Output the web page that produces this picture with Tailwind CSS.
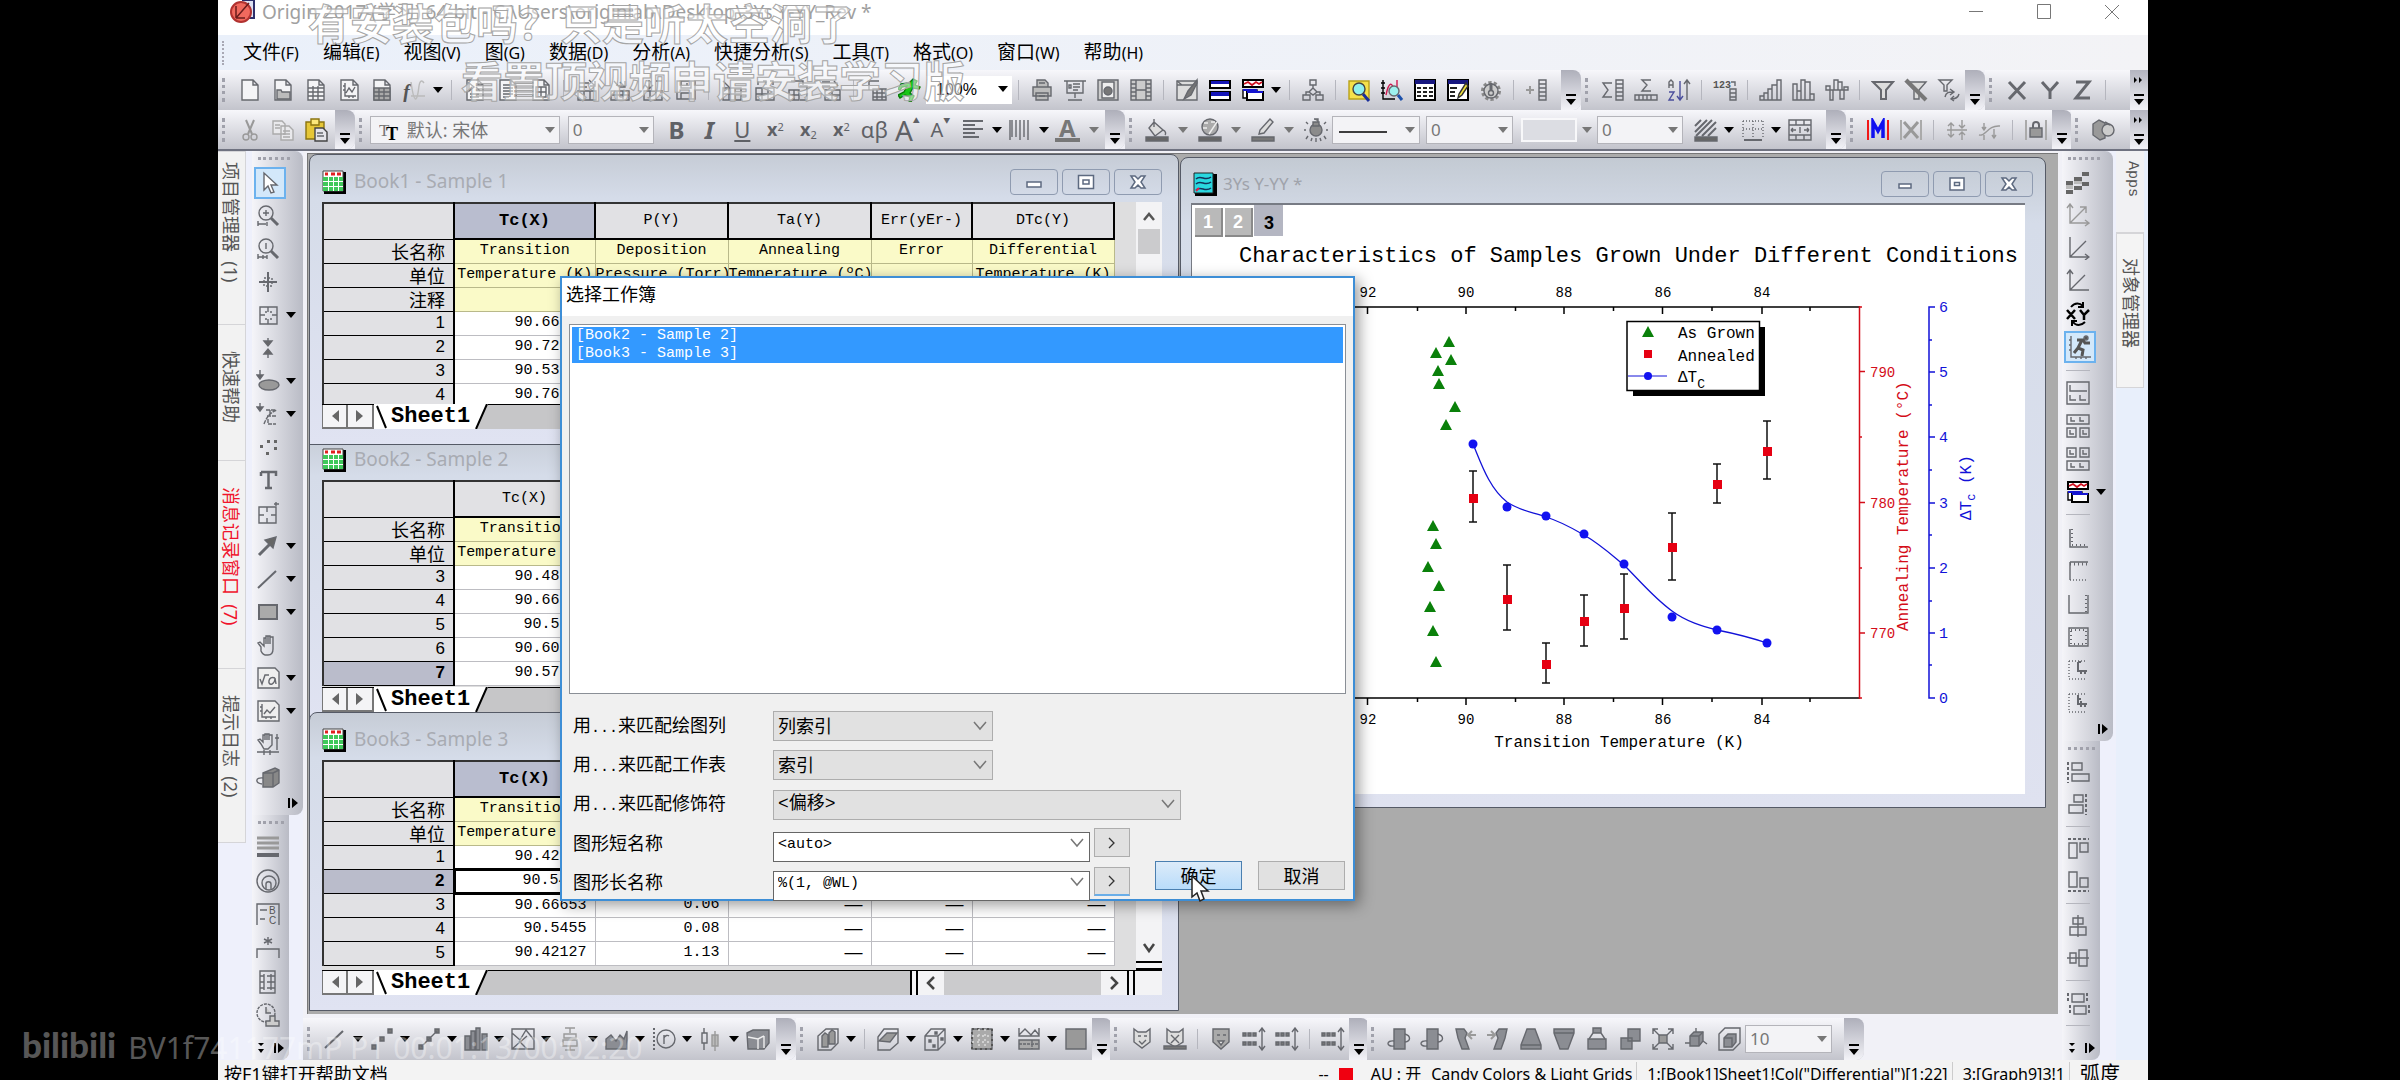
<!DOCTYPE html>
<html lang="zh-CN">
<head>
    <meta charset="UTF-8" />
    <meta name="viewport" content="width=device-width, initial-scale=1.0" />
    <script src="https://cdn.jsdelivr.net/npm/@tailwindcss/browser@4"></script>
    <title>Origin 2017</title>
</head>
<body class="relative h-screen overflow-hidden bg-black pl-[218px] pr-[252px] font-['Noto_Sans','Noto_Sans_CJK_SC',sans-serif] text-black">

<div class="flex h-full flex-col overflow-hidden bg-[#f1f1f7]">

    <!-- Title bar -->
    <header class="flex h-[35px] shrink-0 items-start bg-white pl-3 pr-7">
        <svg class="h-8 w-7 shrink-0" viewBox="0 0 28 32"><path d="M12 0h12v18h-8" fill="#dfe2f2" stroke="#2d2f6b" stroke-width="2"/><ellipse cx="11" cy="12" rx="10" ry="10" fill="#f0695e" stroke="#b13230" stroke-width="2"/><path d="M6 18L19 3M6 18V6M6 18h9" stroke="#6b1d1d" stroke-width="1.5" fill="none"/></svg>
        <h1 class="ml-1 whitespace-pre text-[19px] leading-6 text-[#a0a0a0]">Origin 2017 (学习) 64-bit - C:\Users\originlab\Desktop\3Ys Y-YY_Rev *</h1>
        <div class="ml-auto flex gap-[52px] pt-1">
            <button aria-label="最小化"><svg class="size-4" viewBox="0 0 16 16" fill="none" stroke="#777"><path d="M1 7.500h14"/></svg></button>
            <button aria-label="最大化"><svg class="size-4" viewBox="0 0 16 16" fill="none" stroke="#777"><path d="M1.500 .5h13v14h-13z"/></svg></button>
            <button aria-label="关闭"><svg class="size-4" viewBox="0 0 16 16" fill="none" stroke="#777"><path d="M1 1l14 14M15 1L1 15"/></svg></button>
        </div>
    </header>

    <!-- Menu -->
    <nav class="flex h-[35px] shrink-0 items-center gap-6 bg-gradient-to-r from-[#eaf0fa] to-[#f3f3f6] text-[19px]">
        <span class="-mr-6 ml-1 h-6 w-[21px] border-l-2 border-dotted border-[#a8a8b4]"></span>
        <a href="#">文件<span class="text-[16px]">(F)</span></a>
        <a href="#">编辑<span class="text-[16px]">(E)</span></a>
        <a href="#">视图<span class="text-[16px]">(V)</span></a>
        <a href="#">图<span class="text-[16px]">(G)</span></a>
        <a href="#">数据<span class="text-[16px]">(D)</span></a>
        <a href="#">分析<span class="text-[16px]">(A)</span></a>
        <a href="#">快捷分析<span class="text-[16px]">(S)</span></a>
        <a href="#">工具<span class="text-[16px]">(T)</span></a>
        <a href="#">格式<span class="text-[16px]">(O)</span></a>
        <a href="#">窗口<span class="text-[16px]">(W)</span></a>
        <a href="#">帮助<span class="text-[16px]">(H)</span></a>
    </nav>

    <!-- Standard toolbar -->
    <div class="flex h-10 shrink-0">
        <div class="flex min-w-0 flex-[1363] items-center rounded-r-lg bg-gradient-to-b from-[#f7f7fb] to-[#c3c4cc]">
            <span class="contents" data-bar="grip new open sheet graph matrix fx v | layout notes table | imp1 imp2 imp3 save | tree bin bin2 bin3 | sheet2 run"></span>
            <label class="relative h-7 w-[86px] shrink-0 bg-white">
                <select aria-label="缩放" class="h-full w-full appearance-none pl-2.5 font-['Liberation_Sans',sans-serif] text-[16px]"><option>100%</option></select>
                <svg class="pointer-events-none absolute top-2 right-1 h-2.5 w-2.5" viewBox="0 0 10 10"><path d="M0 2h10l-5 6z"/></svg>
            </label>
            <span class="contents" data-bar="| print present page film | brush rows rgraph v | org | search zoomg sheet3 edit gear | addcol fly"></span>
        </div>
        <div class="flex min-w-0 flex-[404] items-center rounded-r-lg bg-gradient-to-b from-[#f7f7fb] to-[#c3c4cc]" data-bar="grip sumcol sumrow sort | num | bars1 bars2 bars3 | funnel nofunnel refunnel fly"></div>
        <div class="flex min-w-0 flex-[163] items-center bg-gradient-to-b from-[#f7f7fb] to-[#c3c4cc]" data-bar="grip X Y Z | more"></div>
    </div>

    <!-- Format toolbar -->
    <div class="flex h-[41px] shrink-0 border-b-2 border-[#6f7280]">
        <div class="flex min-w-0 flex-[137] items-center rounded-r-lg bg-gradient-to-b from-[#f7f7fb] to-[#c3c4cc]" data-bar="grip cut copy paste fly"></div>
        <div class="flex min-w-0 flex-[771] items-center rounded-r-lg bg-gradient-to-b from-[#f7f7fb] to-[#c3c4cc]">
            <span class="contents" data-bar="grip"></span>
            <label class="relative h-7 w-[190px] shrink-0 border border-[#b4b4ba] bg-[#f3f3f6]">
                <svg class="pointer-events-none absolute top-1 left-2 h-5 w-6" viewBox="0 0 24 20"><text x="0" y="15" font-family="Liberation Serif" font-size="17" fill="#777">T</text><text x="7" y="19" font-family="Liberation Serif" font-weight="bold" font-size="18">T</text></svg>
                <select aria-label="字体" class="h-full w-full appearance-none pl-9 text-[18px] leading-6 text-[#777]"><option>默认: 宋体</option></select>
                <svg class="pointer-events-none absolute top-2 right-1 h-2.5 w-2.5" viewBox="0 0 10 10"><path d="M0 2h10l-5 6z" fill="#777"/></svg>
            </label>
            <label class="relative mr-1.5 ml-2 h-7 w-[86px] shrink-0 border border-[#b4b4ba] bg-[#f3f3f6]">
                <select aria-label="字号" class="h-full w-full appearance-none pl-1 text-[17px] leading-6 text-[#777]"><option>0</option></select>
                <svg class="pointer-events-none absolute top-2 right-1 h-2.5 w-2.5" viewBox="0 0 10 10"><path d="M0 2h10l-5 6z" fill="#777"/></svg>
            </label>
            <span class="contents" data-bar="B I U sup sub supsub ab Abig Asmall align v cols v Acolor w fly"></span>
        </div>
        <div class="flex min-w-0 flex-[722] items-center rounded-r-lg bg-gradient-to-b from-[#f7f7fb] to-[#c3c4cc]">
            <span class="contents" data-bar="grip bucket w palette w pencil w bulb"></span>
            <label class="relative h-7 w-[88px] shrink-0 border border-[#b4b4ba] bg-[#f3f3f6]">
                <select aria-label="线型" class="h-full w-full appearance-none pl-1 text-[17px]"><option></option></select>
                <svg class="pointer-events-none absolute top-2 left-1.5 h-3 w-12" viewBox="0 0 48 12"><path d="M0 7h48" stroke="#000" stroke-width="1.5"/></svg>
                <svg class="pointer-events-none absolute top-2 right-1 h-2.5 w-2.5" viewBox="0 0 10 10"><path d="M0 2h10l-5 6z" fill="#777"/></svg>
            </label>
            <label class="relative ml-1.5 h-7 w-[87px] shrink-0 border border-[#b4b4ba] bg-[#f3f3f6]">
                <select aria-label="线宽" class="h-full w-full appearance-none pl-1 text-[17px] leading-6 text-[#777]"><option>0</option></select>
                <svg class="pointer-events-none absolute top-2 right-1 h-2.5 w-2.5" viewBox="0 0 10 10"><path d="M0 2h10l-5 6z" fill="#777"/></svg>
            </label>
            <label class="relative ml-2 h-6 w-[56px] shrink-0 border-2 border-[#f8f8fa] bg-[#dcdde3]">
                <select aria-label="填充" class="h-full w-full appearance-none"><option></option></select>
            </label>
            <span class="contents" data-bar="w"></span>
            <label class="relative mr-1.5 h-7 w-[86px] shrink-0 border border-[#b4b4ba] bg-[#f3f3f6]">
                <select aria-label="大小" class="h-full w-full appearance-none pl-1 text-[17px] leading-6 text-[#777]"><option>0</option></select>
                <svg class="pointer-events-none absolute top-2 right-1 h-2.5 w-2.5" viewBox="0 0 10 10"><path d="M0 2h10l-5 6z" fill="#777"/></svg>
            </label>
            <span class="contents" data-bar="hatch v border v merge fly"></span>
        </div>
        <div class="flex min-w-0 flex-[225] items-center rounded-r-lg bg-gradient-to-b from-[#f7f7fb] to-[#c3c4cc]" data-bar="grip M Mx | mv1 mv2 | lock fly"></div>
        <div class="flex min-w-0 flex-[77] items-center bg-gradient-to-b from-[#f7f7fb] to-[#c3c4cc]" data-bar="grip cube more"></div>
    </div>

    <!-- Work area -->
    <main class="flex min-h-0 flex-1">
        <aside class="flex w-[34px] shrink-0 flex-col bg-[#eef0fb] text-[18px] leading-6 text-[#555] [text-orientation:sideways]">
            <a href="#" class="h-[174px] w-[28px] whitespace-pre border border-l-0 border-[#d5d5d8] bg-[#f2f2f2] pt-2.5 pr-0.5 [writing-mode:vertical-rl]">项目管理器  (1)</a>
            <a href="#" class="h-[136px] w-[28px] whitespace-pre border border-t-0 border-l-0 border-[#d5d5d8] bg-[#f2f2f2] pt-[26px] pr-0.5 [writing-mode:vertical-rl]">快速帮助</a>
            <a href="#" class="h-[208px] w-[28px] whitespace-pre border border-t-0 border-l-0 border-[#d5d5d8] bg-[#f2f2f2] pt-[26px] pr-0.5 text-[#f0142c] [writing-mode:vertical-rl]">消息记录窗口  (7)</a>
            <a href="#" class="h-[174px] w-[28px] whitespace-pre border border-t-0 border-l-0 border-[#d5d5d8] bg-[#f2f2f2] pt-[26px] pr-0.5 [writing-mode:vertical-rl]">提示日志  (2)</a>
        </aside>

        <div class="flex w-[51px] shrink-0 flex-col bg-[#eef0fb]">
            <div class="flex h-[664px] flex-col rounded-r-lg bg-gradient-to-r from-[#f5f5f9] to-[#b9bbc5]" data-col="vgrip *pointer zoomin zoomout cross screen+ squeeze mask+ maskx+ dots T region arrow+ line+ rect+ hand formula+ graph2+ hand2 cube2 vend"></div>
            <div class="flex w-[37px] flex-1 flex-col rounded-br-lg bg-gradient-to-r from-[#f5f5f9] to-[#b9bbc5]" data-col="vgrip lines rings bc star stamp clock vmore"></div>
        </div>

        <div class="flex min-w-0 flex-1 flex-col">
            <!-- MDI desktop -->
            <div class="relative mt-[2px] mr-[2px] ml-1 min-h-0 flex-1 overflow-hidden border-t border-l border-[#777] bg-[#ababab]">
                <div id="books"></div>

                <!-- Graph window -->
                <section class="absolute top-[3px] left-[872px] flex h-[651px] w-[866px] flex-col rounded-t-lg border border-[#555a66] bg-gradient-to-b from-[#c3cad3] via-[#d5dce9] via-10% to-[#dfe2f0]">
                    <div class="flex h-[45px] shrink-0 items-center gap-1.5 px-3 pt-1.5">
                        <svg class="size-6" viewBox="0 0 24 24"><path d="M2 2h22v22H2z"/><path d="M1 1h19v20H1z" fill="#29d8e0" stroke="#222"/><path d="M3 7c5-5 9 3 15-2M3 12c5-5 9 3 15-2M3 18c5-5 9 3 15-2" fill="none" stroke="#14325a" stroke-width="1.500"/><path d="M3 19l3-3" stroke="#e0204a" stroke-width="2"/></svg>
                        <h2 class="text-[17px] text-[#a0a3ab]">3Ys Y-YY *</h2>
                        <div class="ml-auto flex gap-1">
                            <button aria-label="最小化" class="flex h-[26px] w-12 items-center justify-center rounded-sm border border-[#8f9bb0]"><svg class="size-5" viewBox="0 0 20 20" fill="#fff" stroke="#5d6a80" stroke-width="1.500"><path d="M4 10h12v4H4z"/></svg></button>
                            <button aria-label="还原" class="flex h-[26px] w-12 items-center justify-center rounded-sm border border-[#8f9bb0]"><svg class="size-5" viewBox="0 0 20 20" fill="#fff" stroke="#5d6a80" stroke-width="1.500"><path d="M3 4h14v12H3zM7.500 8.500h5v3h-5z"/></svg></button>
                            <button aria-label="关闭" class="flex h-[26px] w-12 items-center justify-center rounded-sm border border-[#8f9bb0]"><svg class="size-5" viewBox="0 0 20 20" fill="#fff" stroke="#5d6a80" stroke-width="1.500"><path d="M3 4h4l3 3 3-3h4l-4 6 4 6h-4l-3-3-3 3H3l4-6z"/></svg></button>
                        </div>
                    </div>
                    <div class="mr-5 mb-[13px] ml-2.5 min-h-0 flex-1 border-t-2 border-l border-[#777b84] bg-white">
                        <svg id="chart" class="h-[589px] w-[834px]" viewBox="0 0 834 589" font-family="Liberation Mono" font-size="15">
                            <g font-size="18" font-weight="bold" font-family="Liberation Sans">
                                <path d="M3 3h27v28H3zM33 3h27v28H33z" fill="#b9b9b9"/><path d="M3 31h27V3M33 31h27V3" fill="none" stroke="#8a8a8a" stroke-width="2"/><path d="M62 0h29v31H62z" fill="#b4b6c2"/>
                                <text x="11" y="23" fill="#fff">1</text><text x="41" y="23" fill="#fff">2</text><text x="72" y="24">3</text>
                            </g>
                            <text x="47" y="57" font-size="22">Characteristics of Samples Grown Under Different Conditions</text>
                            <g id="axis" fill="none" stroke="#000" stroke-width="1.500">
                                <path d="M60 102H667M60 493H667"/>
                                <path d="M175.500 102v7M274 102v7M372 102v7M470.500 102v7M570 102v7M225.500 102v4M323.500 102v4M421.500 102v4M520 102v4M618 102v4M175.500 493v7M274 493v7M372 493v7M470.500 493v7M570 493v7M225.500 493v4M323.500 493v4M421.500 493v4M520 493v4M618 493v4"/>
                                <path stroke="#d40d19" d="M667.500 101V494M667 166.500h6M667 297.500h6M667 428h6M667 102h3M667 232h3M667 363h3M667 493h3"/>
                                <path stroke="#1212d8" d="M743 102h-6V493h6M737 167h6M737 232h6M737 298h6M737 363h6M737 428h6M737 135h3M737 200h3M737 265h3M737 330h3M737 396h3M737 460h3"/>
                            </g>
                            <g text-anchor="middle" font-size="14">
                                <text x="176" y="92">92</text><text x="274" y="92">90</text><text x="372" y="92">88</text><text x="471" y="92">86</text><text x="570" y="92">84</text>
                                <text x="176" y="519">92</text><text x="274" y="519">90</text><text x="372" y="519">88</text><text x="471" y="519">86</text><text x="570" y="519">84</text>
                                <text x="427" y="542" font-size="16">Transition Temperature (K)</text>
                            </g>
                            <g fill="#d40d19" font-size="14"><text x="678" y="172">790</text><text x="678" y="303">780</text><text x="678" y="433">770</text><text transform="translate(716 426) rotate(-90)" font-size="16">Annealing Temperature (°C)</text></g>
                            <g fill="#1212d8"><text x="747" y="107">6</text><text x="747" y="172">5</text><text x="747" y="237">4</text><text x="747" y="303">3</text><text x="747" y="368">2</text><text x="747" y="433">1</text><text x="747" y="498">0</text><text transform="translate(779 315) rotate(-90)" font-size="16">ΔT<tspan dy="4" font-size="12">c</tspan><tspan dy="-4"> (K)</tspan></text></g>
                            <path d="M281 239C289 258 297 283 315 297C328 306 340 307 354 312C370 317 380 323 392 330C408 339 422 352 432 360C448 376 462 393 480 406C495 417 510 421 525 425C545 429 560 433 575 438" fill="none" stroke="#1212d8" stroke-width="1.300"/>
                            <g id="points"></g>
                            <path d="M441 122h132v69H441z"/><path d="M435 116.500h132.500v69H435z" fill="#fff" stroke="#000" stroke-width="1.500"/>
                            <path d="M456 121l-6 11h12z" fill="#0a800a"/><path d="M452 145h8v8h-8z" fill="#e60012"/><path d="M436 171h39" stroke="#1212d8"/><circle cx="456" cy="171" r="4" fill="#1212f0"/>
                            <g font-size="16"><text x="486" y="133">As Grown</text><text x="486" y="156">Annealed</text><text x="486" y="177">ΔT<tspan dy="6" font-size="13">C</tspan></text></g>
                        </svg>
                    </div>
                </section>
            </div>

            <!-- 2D / 3D graph toolbar -->
            <div class="mt-1 flex h-[42px] shrink-0">
                <div class="flex min-w-0 flex-[493] items-center rounded-r-lg bg-gradient-to-b from-[#f7f7fb] to-[#c3c4cc]" data-bar="grip line v scatter v linesym v column v multi v box v area v polar v stock v stack fly"></div>
                <div class="flex min-w-0 flex-[314] items-center rounded-r-lg bg-gradient-to-b from-[#f7f7fb] to-[#c3c4cc]" data-bar="grip bar3d v | surf v scat3d v contour v profile v image fly"></div>
                <div class="flex min-w-0 flex-[257] items-center rounded-r-lg bg-gradient-to-b from-[#f7f7fb] to-[#c3c4cc]" data-bar="grip mask1 mask2 | mask3 dist1 dist2 | dist3 fly"></div>
                <div class="flex min-w-0 flex-[497] items-center rounded-r-lg bg-gradient-to-b from-[#f7f7fb] to-[#c3c4cc]">
                    <span class="contents" data-bar="grip rot1 rot2 tilt1 tilt2 trap1 trap2 trap3 resize fit orient box3d"></span>
                    <label class="relative h-7 w-[87px] shrink-0 border border-[#b4b4ba] bg-[#f3f3f6]">
                        <select aria-label="角度" class="h-full w-full appearance-none pl-1 text-[17px] leading-6 text-[#777]"><option>10</option></select>
                        <svg class="pointer-events-none absolute top-2 right-1 h-2.5 w-2.5" viewBox="0 0 10 10"><path d="M0 2h10l-5 6z" fill="#777"/></svg>
                    </label>
                    <span class="contents" data-bar="fly"></span>
                </div>
                <div class="flex-[196]"></div>
            </div>
        </div>

        <div class="ml-[2px] flex w-[54px] shrink-0 flex-col bg-[#eef0fb]">
            <div class="flex h-[590px] w-[51px] flex-col rounded-r-lg bg-gradient-to-r from-[#f5f5f9] to-[#b9bbc5]" data-col="vgrip stairs ax1 ax2 ax3 xy *runner - lay1 lay2 lay3 rgraph+ - l1 l2 l3 l4 l5 l6 vend"></div>
            <div class="flex w-[38px] flex-1 flex-col rounded-br-lg bg-gradient-to-r from-[#f5f5f9] to-[#b9bbc5]" data-col="vgrip al1 al2 - al3 al4 - al5 al6 - al7 - vmore"></div>
        </div>
        <aside class="flex w-8 shrink-0 flex-col bg-[#e8effb] text-[18px] leading-6 text-[#555] [text-orientation:sideways]">
            <a href="#" class="h-[82px] w-7 border-b border-[#d5d5d8] bg-[#f1f1f3] pt-2.5 font-['Liberation_Mono',monospace] text-[15px] [writing-mode:vertical-rl]">Apps</a>
            <a href="#" class="h-[155px] w-7 border border-[#d5d5d8] bg-[#f4f4f4] pt-6 [writing-mode:vertical-rl]">对象管理器</a>
        </aside>
    </main>

    <!-- Status bar -->
    <footer class="flex h-5 shrink-0 items-start overflow-hidden bg-[#f3f3f3] pt-0.5 pl-1.5 text-[17px] leading-6">
        <span class="text-[18px]">按F1键打开帮助文档</span>
        <div class="ml-auto flex shrink-0 items-start gap-2.5 pr-7 text-[16px] whitespace-nowrap">
            <span>--</span><span class="mt-1.5 mr-2 h-4 w-3.5 bg-[#f00010]"></span>
            <span>AU : 开</span>
            <span class="border-r border-[#ccc] pr-1">Candy Colors &amp; Light Grids</span>
            <span class="border-r border-[#ccc] pr-1">1:[Book1]Sheet1!Col("Differential")[1:22]</span>
            <span class="border-r border-[#ccc] pr-1">3:[Graph9]3!1</span>
            <span class="text-[20px]">弧度</span>
        </div>
    </footer>
</div>

<!-- Dialog -->
<form role="dialog" aria-labelledby="dlgTitle" class="absolute top-[276px] left-[560px] flex h-[625px] w-[795px] flex-col border-2 border-[#3d8ed6] bg-[#f0f0f0] text-[18px] shadow-[4px_4px_14px_rgba(0,0,0,0.4)]">
    <h2 id="dlgTitle" class="h-[38px] shrink-0 bg-white pl-1 leading-8">选择工作簿</h2>
    <select id="books-list" aria-label="工作簿" multiple size="2" class="mx-[7px] mt-2 h-[370px] shrink-0 overflow-hidden border border-[#8a8f96] bg-white p-0.5 font-['Liberation_Mono',monospace] text-[15px] leading-5">
        <option class="h-[18px] bg-[#3399ff] p-0 pl-1 text-white">[Book2 - Sample 2]</option>
        <option class="h-[18px] bg-[#3399ff] p-0 pl-1 text-white">[Book3 - Sample 3]</option>
    </select>
    <div class="mt-[17px] ml-[11px] grid grid-cols-[200px_1fr] items-center gap-y-[9px]">
        <label for="m1">用<span class="font-['Liberation_Mono',monospace] text-[15px]">...</span>来匹配绘图列</label>
        <div class="relative h-[30px] w-[220px]"><select id="m1" class="h-full w-full appearance-none border border-[#adadad] bg-[#e1e1e1] pl-1"><option>列索引</option></select><svg class="pointer-events-none absolute top-2.5 right-1.5 h-2.5 w-3.5" viewBox="0 0 14 10"><path d="M1 1l6 7 6-7" fill="none" stroke="#777" stroke-width="1.500"/></svg></div>
        <label for="m2">用<span class="font-['Liberation_Mono',monospace] text-[15px]">...</span>来匹配工作表</label>
        <div class="relative h-[30px] w-[220px]"><select id="m2" class="h-full w-full appearance-none border border-[#adadad] bg-[#e1e1e1] pl-1"><option>索引</option></select><svg class="pointer-events-none absolute top-2.5 right-1.5 h-2.5 w-3.5" viewBox="0 0 14 10"><path d="M1 1l6 7 6-7" fill="none" stroke="#777" stroke-width="1.500"/></svg></div>
        <label for="m3">用<span class="font-['Liberation_Mono',monospace] text-[15px]">...</span>来匹配修饰符</label>
        <div class="relative h-[30px] w-[408px]"><select id="m3" class="h-full w-full appearance-none border border-[#adadad] bg-[#e1e1e1] pl-1 font-['Liberation_Mono','Noto_Sans_CJK_SC',monospace]"><option>&lt;偏移&gt;</option></select><svg class="pointer-events-none absolute top-2.5 right-1.5 h-2.5 w-3.5" viewBox="0 0 14 10"><path d="M1 1l6 7 6-7" fill="none" stroke="#777" stroke-width="1.500"/></svg></div>
        <label for="m4">图形短名称</label>
        <div class="flex gap-1">
            <div class="relative h-[30px] w-[317px]"><input id="m4" value="&lt;auto&gt;" class="h-full w-full border border-[#666] bg-white pb-1 pl-1 font-['Liberation_Mono',monospace] text-[15px]" /><svg class="pointer-events-none absolute top-2.5 right-1.5 h-2.5 w-3.5" viewBox="0 0 14 10"><path d="M1 1l6 7 6-7" fill="none" stroke="#777" stroke-width="1.500"/></svg></div>
            <button type="button" class="h-[29px] w-9 border border-[#adadad] bg-[#e1e1e1]" aria-label="短名称选项"><svg class="mx-auto h-3 w-2" viewBox="0 0 8 12"><path d="M1 1l5 5-5 5" fill="none" stroke="#333" stroke-width="1.300"/></svg></button>
        </div>
        <label for="m5">图形长名称</label>
        <div class="flex gap-1">
            <div class="relative h-[30px] w-[317px]"><input id="m5" value="%(1, @WL)" class="h-full w-full border border-[#666] bg-white pb-1 pl-1 font-['Liberation_Mono',monospace] text-[15px]" /><svg class="pointer-events-none absolute top-2.5 right-1.5 h-2.5 w-3.5" viewBox="0 0 14 10"><path d="M1 1l6 7 6-7" fill="none" stroke="#777" stroke-width="1.500"/></svg></div>
            <button type="button" class="h-[29px] w-9 border border-b-2 border-[#adadad] border-b-[#6aaee8] bg-[#e1e1e1]" aria-label="长名称选项"><svg class="mx-auto h-3 w-2" viewBox="0 0 8 12"><path d="M1 1l5 5-5 5" fill="none" stroke="#333" stroke-width="1.300"/></svg></button>
        </div>
    </div>
    <div class="-mt-9 mr-2 ml-auto flex gap-4">
        <button type="button" class="h-[29px] w-[87px] border border-[#4a7fb0] bg-gradient-to-b from-[#dcebf9] to-[#b9dcfa] leading-6">确定</button>
        <button type="button" class="h-[29px] w-[87px] border border-[#adadad] bg-[#e1e1e1] leading-6">取消</button>
    </div>
</form>
<svg class="absolute top-[875px] left-[1191px] h-7 w-5" viewBox="0 0 20 28"><path d="M1 1v21l5-4 3 8 4-2-3-8h7z" fill="#fff" stroke="#222" stroke-width="1.500"/></svg>

<!-- Comments and watermark over the video -->
<p class="absolute top-[3px] left-[308px] text-[42px] leading-[42px] font-bold whitespace-nowrap text-white/50 [-webkit-text-stroke:1px_#a5a5a5]">有安装包吗？只是听太空洞了</p>
<p class="absolute top-[60px] left-[461px] text-[42px] leading-[42px] font-bold whitespace-nowrap text-white/50 [-webkit-text-stroke:1px_#a5a5a5]">看置顶视频申请安装学习版</p>
<div class="absolute bottom-4 left-[22px] flex items-end gap-3 whitespace-nowrap text-white/35">
    <span class="font-['Lato',sans-serif] text-[35px] leading-10 font-black">bilibili</span>
    <span class="font-['Noto_Sans',sans-serif] text-[30px] leading-8">BV1f741177mP P1 00:01:13/00:02:20</span>
</div>

<script>
    const doc = '<path d="M4 2h11l5 5v15H4zM15 2v5h5" fill="#f4f4f6"/>';
    const G = '#8b8d93';
    // 24x24 glyphs; plain strings are path data
    const icons = {
        new: doc, open: doc + '<path d="M6 12h4l1 2h8v7H6z" fill="#bbb"/>',
        sheet: doc + '<path d="M4 10h16M4 14h16M4 18h16M9 8v14M14 8v14"/>',
        graph: '<path d="M4 2h12l5 5v15H4zM16 2v5h5" fill="#f4f4f6"/><path d="M8 5v13h11M9 15l3-5 3 4 3-5M6 8h2M6 12h2M12 18v2M16 18v2"/>',
        matrix: doc + '<path d="M4 10h16v12H4z" fill="#aaa"/><path d="M4 14h16M4 18h16M9 10v12M14 10v12"/>',
        fx: '<text x="0" y="21" font-size="20" font-style="italic" font-weight="bold" font-family="Liberation Serif" fill="#555" stroke="none">f</text><path d="M8 4c3 22 6 22 8 4 1-6 3-6 5-3M8 18h14" stroke="#bbb"/>',
        layout: doc + '<path d="M6 5l5 4-5 4zM7 16h9M7 19h9M13 9l4 4"/>', notes: doc + '<path d="M7 7h7M7 10h10M7 13h10M7 16h10M7 19h6"/>', table: doc + '<path d="M7 9h10v10H7zM7 14h10M12 9v10"/>',
        imp1: 'M4 5h10M4 9h8M3 13h18v9H3zM9 13v9M15 13v9M14 2l6 6M20 3v5h-5', imp2: 'M3 13h18v9H3zM9 13v9M15 13v9M3 17h18M6 3l5 6M12 4l5 5M17 3v6h-6', imp3: 'M3 13h18v9H3zM9 13v9M15 13v9M8 2v8M4 7l4 4 4-4M15 3h6',
        save: 'M3 3h18v18H3zM7 3v7h10V3M7 21v-6h10v6M13 5v3',
        tree: 'M3 3l8 8M3 10h18v12H3zM9 10v12M15 10v12M3 16h18', bin: 'M3 10h18v12H3zM9 10v12M15 10v12M3 16h18M5 3v4M10 3h3v4M17 3h3v4', bin2: 'M3 12h10v10H3zM3 17h10M8 12v10M14 8h7v14h-7M5 3h12v4', bin3: 'M6 12h15v10H6zM6 17h15M13 12v10M3 4h8M3 8h8M15 3l4 5',
        sheet2: 'M4 2v10M4 3h10M8 11h13v11H8zM8 15h13M8 19h13M12 11v11M17 11v11',
        run: '<path d="M15 1l4 2-2 4 5 2-1 2-6-1-3 5 4 3-3 6-2-1 1-4-5-2-5 3-2-3 6-3 3-6-5 1-2 3-2-1 3-5 8-1z" fill="#18c718" stroke="#0a7a0a"/>',
        print: '<path d="M7 9V2h8l3 3v4M3 9h18v9H3zM6 15h12v7H6z" fill="#bbb"/><path d="M9 5h6M9 18h6"/>', present: 'M1 3h22M4 3v12h16V3M12 15v5M5 22h14M10 6h7M10 9h7M10 12h5M6 7h2v3H6z',
        page: '<path d="M2 2h20v20H2z" fill="#ccc"/><path d="M6 4h12v16H6z" fill="#eee"/><circle cx="12" cy="13" r="4" fill="#777"/>', film: '<path d="M2 2h20v20H2zM7 2v20M17 2v20M7 12h10M2 6h5M2 10h5M2 14h5M2 18h5M17 6h5M17 10h5M17 14h5M17 18h5" fill="#ccc"/>',
        brush: '<path d="M2 3h20v19H2z" fill="#ddd"/><path d="M2 7h20M2 3l5 4"/><path d="M22 2L13 13l-4 8 7-4 6-12z" fill="#777"/>',
        rows: '<g stroke="#000" stroke-width="2"><path d="M2 3h20v7H2zM2 14h20v8H2z" fill="#fff"/></g><path d="M3 3h18v3H3zM3 14h18v4H3z" fill="#1515b8" stroke="none"/>',
        rgraph: '<path d="M2 2h20v7H2z" fill="#fff" stroke="#000" stroke-width="2"/><path d="M3 6l4-2 4 3 4-3 3 2 3-2" stroke="#d01020" stroke-width="1.800"/><path d="M2 12h14v8H2z" fill="#fff" stroke="#000"/><path d="M6 14h16v8H6z" fill="#fff" stroke="#000" stroke-width="2"/><path d="M2 12h14M6 14h16" stroke="#1515d0" stroke-width="2"/>',
        org: 'M9 2h6v5H9zM12 7v3M12 10l4 4-4 3-4-3zM8 14H5v3M16 14h3v3M2 17h7v5H2zM15 17h7v5h-7z',
        search: '<path d="M2 3h20v18H2z" fill="#f5e04a" stroke="#b8a21a"/><circle cx="12" cy="11" r="6" fill="#8ff0ee" stroke="#444"/><path d="M16 16l6 7" stroke="#1a2f9a" stroke-width="3"/>',
        zoomg: '<path d="M3 2v19h12M1 5h4M1 10h4M1 15h4" stroke="#000"/><path d="M6 17c3-14 6-14 9-2M17 2v14" stroke="#d01850"/><circle cx="14" cy="13" r="5" fill="#9df0ee"/><path d="M18 17l4 5" stroke="#1a4faa" stroke-width="3"/>',
        sheet3: '<path d="M2 2h20v20H2z" fill="#fff" stroke="#000" stroke-width="2"/><path d="M2 2h20v4H2z" fill="#171780" stroke="none"/><path d="M4 10h4M10 10h4M16 10h4M4 14h4M10 14h4M16 14h4M4 18h4M10 18h4M16 18h4" stroke="#222" stroke-width="2"/>',
        edit: '<path d="M2 2h20v20H2z" fill="#fff" stroke="#000" stroke-width="2"/><path d="M2 2h20v4H2z" fill="#171780" stroke="none"/><path d="M4 10h7M4 14h5M4 18h5" stroke="#222" stroke-width="2"/><path d="M20 5l-7 11-1 4 4-3 6-9z" fill="#f2e23c" stroke="#333"/>',
        gear: '<circle cx="12" cy="13" r="8" stroke-width="4" stroke-dasharray="3 2" stroke="#888"/><circle cx="12" cy="13" r="7" fill="#ccc"/><path d="M12 5v8" stroke-width="3"/><circle cx="12" cy="15" r="2.500"/>',
        addcol: '<path d="M1 12h8M5 8v8" stroke="#999" stroke-width="2"/><path d="M14 2h7v20h-7zM14 6h7M14 10h7M14 14h7M14 18h7"/>',
        sumcol: 'M11 5H2l5 7-5 7h9M15 2h7v20h-7zM15 6h7M15 10h7M15 14h7M15 18h7', sumrow: 'M17 2H8l5 5-5 6h9M1 17h22v5H1zM5 17v5M9 17v5M13 17v5M17 17v5',
        sort: '<path d="M2 10V4l2-2 2 2v6M2 7h4M20 22V3M17 6l3-4 3 4"/><path d="M2 14h5l-5 8h5M13 3v18M10 18l3 4 3-4" stroke="#4a4e9c"/>',
        num: '<text x="0" y="10" font-size="10" font-weight="bold" font-family="Liberation Mono" fill="#555" stroke="none">123</text><path d="M18 4h4v4M17 11h6v11h-6zM17 15h6M17 19h6"/>',
        bars1: 'M1 22v-4h4v4zM5 22v-7h4v7zM9 22V11h4v11zM13 22V7h5v15zM18 22V2h4v20z', bars2: 'M1 22V6h4v16zM5 22v-9h4v9zM9 22V2h4v20zM13 22V4h5v18zM18 22v-6h4v6z', bars3: 'M1 12V8h4v4zM5 22V12h3v10zM9 12V2h4v10zM13 12V4h4v8zM15 21v-9h4v9zM19 12V9h4v3z',
        funnel: '<path d="M2 4h20l-7 8v9h-5v-9z" fill="#ddd" stroke-width="2"/>', nofunnel: '<path d="M2 4h20l-7 8v9h-5v-9z" fill="#ddd"/><path d="M2 2l20 20" stroke="#777" stroke-width="4"/>', refunnel: 'M2 2h13l-5 5v6H7V7zM8 19c1-5 4-5 8-5M13 11l4 3-4 3M22 16c-1 4-4 5-8 5M17 18l-3 3 3 2',
        X: '<path d="M4 4l16 17M20 4L4 21" stroke-width="3"/>', Y: '<path d="M4 4l8 9 8-9M12 13v8" stroke-width="3"/>', Z: '<path d="M5 4h13L5 20h14" stroke-width="3"/>',
        cut: '<path d="M8 2l6 14M16 2l-6 14" stroke="#999" stroke-width="2"/><circle cx="8" cy="19" r="3" stroke="#999"/><circle cx="16" cy="19" r="3" stroke="#999"/>', copy: '<g stroke="#aaa" fill="#e9e9ec"><path d="M2 3h9l3 3v10H2zM10 8h8l4 4v10H10z"/><path d="M12 13h7M12 16h7M12 19h7M4 7h5M4 10h5"/></g>',
        paste: '<path d="M2 4h18v17H2z" fill="#e5c637" stroke="#8b7410"/><path d="M7 1h8v6H7z" fill="#fbe77a" stroke="#8b7410"/><path d="M11 10h8l4 4v9H11z" fill="#e5e5ea" stroke="#444"/><path d="M13 15h6M13 18h7"/>',
        align: '<path d="M2 3h20M2 7h12M2 11h20M2 15h12M2 19h16" stroke-width="1.800"/>', cols: 'M4 2v17M8 2v17M12 2v20M16 2v17M20 2v20M2 2v20',
        bucket: '<path d="M9 4l9 8-8 6-6-8zM9 1v8M18 12c3 1 3 4 2 5" fill="#ddd"/><path d="M1 19h22v4H1z" fill="#666"/>', palette: '<circle cx="12" cy="9" r="8" fill="#aaa"/><path d="M6 5h4M13 4h4M5 10h4M11 16l8-12" stroke="#eee"/><path d="M1 19h22v4H1z" fill="#666"/>', pencil: '<path d="M19 1l3 3-9 11-5 1 1-4z" fill="#ddd"/><path d="M1 19h22v4H1z" fill="#777"/>',
        bulb: '<circle cx="12" cy="12" r="6" fill="#8b8b8b"/><path d="M9 4h6v4H9zM10 1h4v3M2 12H0M24 12h-2M4 18l-2 3M20 18l2 3M8 20l-1 3M16 20l1 3M12 20v4M4 6L2 4M20 6l2-2" fill="#8b8b8b"/>',
        hatch: '<path d="M1 8l6-6M1 14L13 2M2 18L18 2M8 18L22 4M14 18l8-8" stroke-width="2"/><path d="M1 19h22v4H1z" fill="#666"/>', border: '<path d="M2 3h20M2 3v17M12 3v17M22 3v17M2 11h20" stroke-dasharray="1 2"/><path d="M3 22h18" stroke-width="2"/>',
        merge: 'M1 2h22v20H1zM1 7h22M1 17h22M8 2v5M16 2v5M8 17v5M16 17v5M3 12h5M3 12l2-2M3 12l2 2M21 12h-5M21 12l-2-2M21 12l-2 2M12 9v6',
        M: '<path d="M2 2v20M22 2v20" stroke="#f01818" stroke-width="2"/><path d="M7 20V4l5 9 5-9v16" stroke="#1010f0" stroke-width="3.500"/>', Mx: '<path d="M2 2v20M22 2v20" stroke="#aaa" stroke-width="2"/><path d="M5 4l14 16M19 4L5 20" stroke="#999" stroke-width="3"/>',
        mv1: '<path d="M6 5v14M3 8l3-3 3 3M3 16l3 3 3-3M17 2v8M14 7l3 3 3-3M17 22v-8M14 17l3-3 3 3M2 12h20" stroke="#999"/>', mv2: '<path d="M1 17c7 2 8-10 21-9M6 5v6M4 9l2 3 2-3M16 11v8M14 17l2 3 2-3M6 22v-5" stroke="#999"/>',
        lock: '<path d="M2 2v20M22 2v20" stroke="#aaa" stroke-width="2"/><path d="M6 10h12v9H6z" fill="#999"/><path d="M9 10V7c0-4 6-4 6 0v3" stroke-width="2"/>',
        cube: '<path d="M2 6l6-4 6 3v15l-5 2-7-5z" fill="#999"/><circle cx="17" cy="12" r="6" fill="#ccc"/><path d="M14 4l5 3" stroke-width="2"/>',
        pointer: '<path d="M6 2v17l4-4 3 7 3-1-3-7h6z" fill="#fff"/>',
        zoomin: '<circle cx="10" cy="9" r="7"/><path d="M7 9h6M10 6v6M2 20h8M2 17v5M11 18v4"/><path d="M15 14l7 7" stroke-width="3"/>', zoomout: '<circle cx="10" cy="9" r="7"/><path d="M10 6v6M2 20h9M2 17v5M7 18v4M11 18v4"/><path d="M15 14l7 7" stroke-width="3"/>',
        cross: '<path d="M12 2v20M3 12h18" stroke-width="2"/><path d="M8 8h8v8H8z" stroke-dasharray="2 2"/>', screen: 'M4 4h17v17H4zM12 4v5M12 21v-5M4 12h5M21 12h-5M9 9h2M14 9h2M9 16h2M14 16h2', squeeze: '<path d="M12 2v5M8 5l4 5 4-5zM8 18l4-5 4 5zM12 17v5" fill="#666"/>',
        mask: '<path d="M4 1v9M1 6l3 4 3-4z" fill="#555"/><ellipse cx="13" cy="16" rx="10" ry="5" fill="#999"/>', maskx: '<path d="M4 1v8M1 5l3 4 3-4z" fill="#555"/><path d="M10 8h10M11 14h10M8 22c3-8 7-12 13-14M14 8v4M12 17v5h8" stroke-dasharray="4 1"/>',
        dots: '<g fill="#666" stroke="none"><path d="M4 10h3v3H4zM11 5h3v3h-3zM18 12h3v3h-3zM10 17h3v3h-3zM18 5h3v3h-3z"/></g>', T: '<path d="M5 4h15v4M5 8V4M12.500 4v16M9 20h7" stroke-width="2.500"/>', region: 'M3 6h17v16H3zM11 6v5M11 22v-5M3 14h5M20 14h-5M20 1v4M18 3h5',
        arrow: '<path d="M3 21L15 9" stroke-width="3"/><path d="M20 3l-3 11-8-8z" fill="#666"/>', line: '<path d="M2 21L20 4" stroke-width="2"/>', rect: '<path d="M3 5h18v14H3z" fill="#aaa" stroke-width="2"/>',
        hand: 'M5 14l-3-4 2-1 4 4V5h2v6V3h2v8V3h2v8V4h3v12c0 4-2 6-5 6h-3c-2 0-3-2-4-4z',
        formula: '<path d="M2 2h17l4 4v16H2z" fill="#eee"/><path d="M4 13l2 5 3-9h4M19 12c-7-3-8 8-3 6 2-1 3-4 3-6l1 6"/>', graph2: '<path d="M2 2h17l4 4v16H2z" fill="#eee"/><path d="M6 5v13h14M8 15l3-4 3 3 5-6M6 8H4M6 12H4M10 18v2M15 18v2"/>',
        hand2: 'M5 12l-3-4 2-1 3 3V3h2v5V2h2v6V2h2v6V3h3v10l-4 4h-4zM1 20h22M19 6h4M21 2v16M8 18v5M14 18v5', cube2: '<path d="M7 8l12-5 4 2v13l-6 4H7z" fill="#888"/><path d="M7 8h10v14M17 8l6-3M7 13c-8-1-8 5-1 6"/>',
        lines: '<path d="M1 3h22M1 8h22M1 13h22" stroke-width="3" stroke="#999"/><path d="M1 20h22" stroke-width="4"/>', rings: '<circle cx="12" cy="12" r="11"/><circle cx="13" cy="14" r="7"/><path d="M10 20v-5c0-3 5-3 5 0v5"/>', bc: '<path d="M1 23V2h22v21M4 8h7M4 17h5"/><text x="13" y="12" font-size="10" font-family="Liberation Sans" fill="#555" stroke="none">B</text><text x="13" y="22" font-size="10" font-family="Liberation Sans" fill="#555" stroke="none">C</text>',
        star: 'M12 1v8M8 3l8 4M16 3L8 7M1 22V13h22v9', stamp: 'M4 1h15v22H4zM8 4v16M15 4v16M11 6h8M11 12h8M11 18h8M4 6h4M4 12h4M4 18h4', clock: '<circle cx="10" cy="10" r="9" stroke-dasharray="3 1"/><path d="M10 4v6h5M14 13h5v5h4v5H10v-5h4z" fill="#ccc"/>',
        scatter: '<path d="M2 18h4v4H2zM10 10h4v4h-4zM18 2h4v4h-4z" fill="#777"/>', linesym: '<path d="M2 18h4v4H2zM10 10h4v4h-4zM18 2h4v4h-4zM4 20L20 4" fill="#777"/>', column: `<path d="M1 9h5v14H1zM7 4h4v19H7zM12 1h4v22h-4zM18 7h5v16h-5z" fill="${G}"/>`,
        multi: 'M1 2h22v20H1zM1 6l8 7 6-10 8 10M1 22L16 9M8 14l8 8', box: '<path d="M12 1v5M7 1h10M6 7h12v4H6zM5 13h14v6H5zM12 19v4M7 23h10" stroke="#999"/>', area: `<path d="M1 22V12l5-4 5 6 4-6 4 4 3-8v18z" fill="${G}"/>`,
        polar: '<circle cx="14" cy="12" r="9"/><path d="M2 1v22" stroke-dasharray="2 2" stroke-width="2"/><path d="M12 8v9M12 11c1-3 4-3 5-2"/>', stock: '<path d="M5 1v5M3 6h5v10H3zM5 16v7"/><path d="M16 4v20M13 8h6v11h-6z" stroke="#999" fill="#bbb"/>', stack: `<path d="M1 6l6-3h16v13l-5 6H2z" fill="${G}"/><path d="M2 10l10 2 6-3M12 12v10M18 9v12" stroke="#eee"/>`,
        bar3d: '<path d="M2 9l8-7h12v14l-7 7H2z"/><path d="M6 9l3-3 3 2v12H6zM13 6l3-3 3 2v12h-6z" fill="#999"/>', surf: '<path d="M2 10l6-8h14v14l-8 7H2z"/><path d="M3 14l8-8h10l-7 9z" fill="#999"/>', scat3d: '<path d="M2 9l6-7h14v14l-7 7H2zM2 9h13v14M15 9l7-7"/><path d="M6 13h2v2H6zM10 18h2v2h-2zM12 5h2v2h-2zM18 11h2v2h-2z" fill="#555"/>',
        contour: '<path d="M2 2h20v20H2z" fill="#aaa"/><path d="M2 2h20v20H2z" stroke="#555" stroke-width="2" stroke-dasharray="2 3"/><path d="M2 9h20M2 15h20M9 2v20M15 2v20" stroke="#ddd" stroke-dasharray="2 3"/>', profile: '<path d="M2 1v8h20V1M2 8l6-6 6 6 4-5 4 5"/><path d="M2 13h20v9H2z" fill="#aaa"/><path d="M2 17h20M15 13v9" stroke-dasharray="3 1"/>', image: '<path d="M2 2h20v20H2z" fill="#999"/>',
        mask1: '<path d="M4 2l4 3h8l4-3v13l-8 6-8-6z" fill="#ddd"/><path d="M8 9h3M14 9h3M9 14l3 3 4-4"/>', mask2: '<path d="M4 2l4 3h8l4-3v13l-8 5-8-5z" fill="#ddd"/><path d="M8 8l8 8M16 8l-8 8"/><path d="M1 19h22v3H1z" fill="#777"/>', mask3: '<path d="M4 2h16v13l-8 7-8-7z" fill="#aaa"/><path d="M8 8h3M14 8h3M9 14h6l-3 4z" fill="#eee"/>',
        dist1: '<path d="M1 6h3v3H1zM6 6h3v3H6zM11 6h3v3h-3zM1 15h3v3H1zM6 15h3v3H6zM11 15h3v3h-3z" fill="#777"/><path d="M20 1v22M17 5l3-4 3 4M17 19l3 4 3-4"/>', rot1: `<path d="M7 2h11v20H7z" fill="${G}"/><path d="M7 14c-8-1-8 6 0 5M18 7c6 2 6 7 0 8"/>`,
        tilt1: `<path d="M3 2h8l3 4-2 5 4 11H9L5 11z" fill="${G}"/><path d="M23 8h-7M19 4l-4 4 4 4" stroke="#999" stroke-width="2"/>`, tilt2: `<path d="M21 2h-8l-3 4 2 5-4 11h7l4-11z" fill="${G}"/><path d="M1 8h7M5 4l4 4-4 4" stroke="#999" stroke-width="2"/>`,
        trap1: `<path d="M8 2h8l6 16v4H2v-4zM2 18h20" fill="${G}"/>`, trap2: `<path d="M2 2h20v4l-6 16H8L2 6zM2 6h20" fill="${G}"/>`, trap3: `<path d="M3 12h18v10H3zM8 1h8v5H8z" fill="${G}"/><path d="M8 6l-4 6M16 6l4 6"/>`,
        resize: `<path d="M10 2h12v12H10zM3 11h11v11H3z" fill="${G}"/>`, fit: '<path d="M8 8h8v8H8z" fill="#999"/><path d="M2 7V2h5M2 2l6 6M22 7V2h-5M22 2l-6 6M2 17v5h5M2 22l6-6M22 17v5h-5M22 22l-6-6"/>', orient: `<path d="M6 9l4-4h9v9l-4 5H6z" fill="${G}"/><path d="M6 9h9v10M15 9l4-4M1 16h5M12 1v4M19 14l4 3"/>`, box3d: `<path d="M7 11l4-4h8v8l-4 5H7z" fill="${G}"/><path d="M7 11h8v9M2 7l6-6h15v15l-7 7H2z"/>`,
        stairs: '<path d="M16 2h7v4h-7zM8 7h8v4H8zM0 11h7v4H0zM16 12h7v4h-7zM8 16h8v4H8zM0 20h7v4H0z" fill="#666" stroke="none"/><path d="M8 11h8v3H8zM0 15h7v4H0z" fill="#bbb" stroke="none"/>', ax1: '<path d="M4 2v18h18M1 5l3-4 3 4M19 17l4 3-4 3M4 20L20 4M14 4h6v6" stroke="#999"/>', ax2: 'M4 1v20h18M4 21L20 5M19 18l4 3-4 3', ax3: 'M4 1v20h19M4 21L19 6M1 5l3-4 3 4',
        xy: '<g stroke="#000" stroke-width="2.500"><path d="M1 8l8 9M9 8l-8 9M14 8l4 5 5-5M18 13v5"/><path d="M5 5c4-5 9-4 12-1M17 0v5h-5M19 20c-4 4-9 4-12 0M6 24v-5h5" stroke-width="2"/></g>', runner: '<path d="M3 1v21h20M1 5h2M1 10h2M1 15h2M8 22v2M13 22v2M18 22v2"/><circle cx="18" cy="3" r="2" fill="#555"/><path d="M9 5h6l2 3h5M14 5l-4 8 5 2-1 6M10 13l-4 5" stroke-width="3" stroke="#555"/>',
        lay1: 'M1 1h22v22H1zM4 4v6h17M4 14v5h6M14 14v5h6', lay2: 'M1 1h22v9H1zM1 14h9v9H1zM14 14h9v9h-9zM5 3v4h4M14 3v4h4M4 16v4h4M17 16v4h4', lay3: 'M1 1h9v9H1zM14 1h9v9h-9zM1 14h22v9H1zM4 3v4h4M17 3v4h4M5 16v4h4M14 16v4h4',
        l1: '<path d="M4 3v18h18" stroke-width="1.500"/><path d="M6 3v16h16" stroke-dasharray="1 3" stroke-width="2"/>', l2: '<path d="M4 3v18M4 3h18" /><path d="M4 5h18" stroke-dasharray="1 3" stroke-width="3"/><path d="M4 21h18" stroke-dasharray="1 2"/>', l3: '<path d="M3 3v18h19V3"/><path d="M20 3v18" stroke-dasharray="1 3" stroke-width="2"/>', l4: '<path d="M3 3h19v18H3z"/><path d="M5 5h15v14H5z" stroke-dasharray="1 3" stroke-width="2"/>', l5: '<path d="M3 3v18h18M3 3h18" stroke-dasharray="1 2"/><path d="M12 4v9h9M15 4h-3M15 13v3M19 13v3" stroke-width="2"/>', l6: '<path d="M3 3h18M3 3v18h18" stroke-dasharray="1 2"/><path d="M12 4v9h9M15 8h-3M15 10v6M19 13v3" stroke-width="2"/>',
        al1: '<path d="M2 2v21" stroke-dasharray="3 2" stroke-width="2"/><path d="M6 3h10v7H6zM6 14h17v7H6z"/>', al2: '<path d="M20 2v21" stroke-dasharray="3 2" stroke-width="2"/><path d="M8 3h9v7H8zM3 13h14v8H3z"/>', al3: '<path d="M2 2h21" stroke-dasharray="3 2" stroke-width="2"/><path d="M3 6h8v15H3zM14 6h8v9h-8z"/>', al4: '<path d="M2 22h21" stroke-dasharray="3 2" stroke-width="2"/><path d="M3 3h8v15H3zM14 9h8v9h-8z"/>', al5: 'M12 1v22M7 4h10v6H7zM4 13h16v8H4z', al6: 'M1 12h22M4 7h6v10H4zM13 4h8v16h-8z', al7: '<path d="M6 3h12v8H6zM8 15h12v8H8z"/><path d="M2 2v10M21 2v10M4 14v10M23 14v10" stroke-dasharray="3 2" stroke-width="2"/>',
    };
    icons.dist2 = icons.dist3 = icons.dist1; icons.rot2 = icons.rot1;

    // glyphs that are simply letters
    const letters = {
        B: '<b class="font-[\'Liberation_Serif\',serif] text-[24px]">B</b>', I: '<b class="font-[\'Liberation_Serif\',serif] text-[24px] italic">I</b>', U: '<span class="font-[\'Liberation_Serif\',serif] text-[22px] underline">U</span>',
        sup: '<b class="font-[\'Liberation_Serif\',serif] text-[18px]">x<sup class="text-[11px] font-normal">2</sup></b>', sub: '<b class="font-[\'Liberation_Serif\',serif] text-[18px]">x<sub class="text-[11px] font-normal">2</sub></b>', supsub: '<b class="font-[\'Liberation_Serif\',serif] text-[18px]">x<sup class="text-[11px] font-normal">2</sup></b>',
        ab: '<span class="font-[\'Liberation_Serif\',serif] text-[22px]">αβ</span>', Abig: '<span class="font-[\'Liberation_Serif\',serif] text-[28px]">A</span><span class="mb-4 text-[7px]">▲</span>', Asmall: '<span class="font-[\'Liberation_Serif\',serif] text-[20px]">A</span><span class="mb-4 text-[7px]">▼</span>',
        Acolor: '<b class="border-b-4 border-[#777] px-1 font-[\'Liberation_Serif\',serif] text-[24px] leading-5 text-[#777]">A</b>',
    };

    const svg = n => letters[n] || `<svg class="size-6 shrink-0" viewBox="0 0 24 24" fill="none" stroke="#66686e" stroke-width="1.400">${icons[n][0] === '<' ? icons[n] : `<path d="${icons[n]}"/>`}</svg>`;
    const down = c => `<svg class="h-2.5 w-2.5 shrink-0" viewBox="0 0 10 10"><path d="M0 2h10l-5 6z" fill="${c}"/></svg>`;
    const chev = '<svg class="h-9 w-3" viewBox="0 0 12 36"><path d="M1 5l3 3-3 3zM6 5l3 3-3 3zM1 22h10v2H1zM1 27h10l-5 6z"/></svg>';

    function barItem(t) {
        if (t === 'grip') return '<span class="mr-2 ml-1 h-6 w-0 shrink-0 border-l-3 border-dotted border-[#a0a1ab]"></span>';
        if (t === '|') return '<span class="mx-[6px] h-5 w-px shrink-0 bg-[#b5b6be]"></span>';
        if (t === 'v') return `<span class="flex w-3.5 shrink-0 justify-center">${down('#000')}</span>`;
        if (t === 'w') return `<span class="flex w-5 shrink-0 justify-center">${down('#777')}</span>`;
        if (t === 'fly') return '<button aria-label="更多" class="ml-auto flex h-full w-5 shrink-0 items-end justify-center rounded-r-lg bg-gradient-to-b from-[#aeafba] to-[#f3f3f8] pb-1"><svg class="h-3 w-3" viewBox="0 0 12 12"><path d="M1 0h10v2H1zM1 5h10l-5 6z"/></svg></button>';
        if (t === 'more') return `<button aria-label="更多" class="ml-auto flex h-full w-[18px] shrink-0 items-center justify-center bg-gradient-to-b from-[#b4b5c0] to-[#f3f3f8]">${chev}</button>`;
        return `<button aria-label="${t}" class="flex h-8 w-[33px] shrink-0 items-center justify-center text-[#5f6166]">${svg(t)}</button>`;
    }

    function colItem(t) {
        if (t === 'vgrip') return '<span class="mx-1.5 mt-1.5 mb-1.5 h-0 w-8 max-w-[70%] shrink-0 border-t-3 border-dotted border-[#a0a1ab]"></span>';
        if (t === '-') return '<span class="mx-1 my-[6px] h-px w-6 shrink-0 bg-[#b5b6be]"></span>';
        if (t === 'vmore') return '<button aria-label="更多" class="mt-2 mb-1 flex h-4 shrink-0 items-center justify-end gap-2 pr-1"><svg class="h-3 w-2" viewBox="0 0 8 12"><path d="M1 1h6L4 4zM1 7h6l-3 4z"/></svg><svg class="h-3 w-3" viewBox="0 0 12 12"><path d="M1 1h2v10H1zM5 1l6 5-6 5z"/></svg></button>';
        if (t === 'vend') return '<button aria-label="更多" class="mt-0.5 mb-1 flex h-4 shrink-0 items-center justify-end pr-1"><svg class="h-3 w-3" viewBox="0 0 12 12"><path d="M1 1h2v10H1zM5 1l6 5-6 5z"/></svg></button>';
        const active = t[0] === '*', drop = t.endsWith('+'), n = t.replace(/[*+]/g, '');
        return `<button aria-label="${n}" class="flex min-h-0 w-full flex-1 items-center gap-1.5"><span class="${active ? 'flex h-8 w-8 ml-0.5 items-center justify-center border-2 border-[#6cb2ee] bg-[#d3e8fa]' : 'ml-1 flex'}">${svg(n)}</span>${drop ? down('#000') : ''}</button>`;
    }

    document.querySelectorAll('[data-bar]').forEach(el => el.innerHTML = el.dataset.bar.split(' ').map(barItem).join(''));
    document.querySelectorAll('[data-col]').forEach(el => el.innerHTML = el.dataset.col.split(' ').map(colItem).join(''));

    // Workbooks
    const names = ['Transition', 'Deposition', 'Annealing', 'Error', 'Differential'];
    const units = ['Temperature (K)', 'Pressure (Torr)', 'Temperature (ºC)', '', 'Temperature (K)'];
    const d = '<span class="font-[\'Liberation_Sans\',sans-serif] text-[18px]">—</span>';
    const books = [
        { n: 2, pos: 'top-[278px] h-[290px]', h: 'h-[207px]', rows: [[3, '90.48127'], [4, '90.66213'], [5, '90.5521'], [6, '90.60412'], [7, '90.57322']], sel: 7 },
        { n: 1, pos: 'top-0 h-[291px]', h: 'h-[202px]', bold: true, comment: true, rows: [[1, '90.66412'], [2, '90.72013'], [3, '90.53921'], [4, '90.76220']] },
        { n: 3, pos: 'top-[558px] h-[299px]', h: 'h-[210px]', bold: true, rows: [[1, '90.42127'], [2, '90.5455'], [3, '90.66653', '0.06', d, d, d], [4, '90.5455', '0.08', d, d, d], [5, '90.42127', '1.13', d, d, d]], sel: 2, active: 2 },
    ];
    const ctl = 'flex h-[26px] w-12 items-center justify-center rounded-sm border border-[#8f9bb0]';
    const side = 'border-r-2 border-b border-black py-0 pr-2 text-right';
    const yl = 'border-r border-b border-[#b9b98a] bg-[#fafac8] text-center whitespace-nowrap overflow-hidden p-0';

    function bookHtml(b) {
        const info = (label, vals) => `<tr class="h-6"><th class="${side} bg-[#e1e1e4] font-['Noto_Sans_CJK_SC',sans-serif] text-[18px] leading-[20px] font-normal">${label}</th>${vals.map(v => `<td class="${yl}">${v}</td>`).join('')}</tr>`;
        const rows = b.rows.map(r => `<tr class="h-6"><th class="${side} ${r[0] === b.sel ? 'bg-[#babccb] font-bold' : 'bg-[#e1e1e4] font-normal'} font-['Liberation_Sans',sans-serif] text-[17px]">${r[0]}</th>${[1, 2, 3, 4, 5].map(i => `<td class="${i === 1 && r[0] === b.active ? 'border-3 border-black' : 'border-r border-b border-[#bdbdc2]'} bg-white py-0 pr-2 text-right">${r[i] || ''}</td>`).join('')}</tr>`).join('');
        return `<section class="absolute left-px ${b.pos} flex w-[870px] flex-col rounded-t-lg border border-[#555a66] bg-gradient-to-b from-[#c6ccd6] via-[#d5dce9] via-15% to-[#e0e3f2] pl-3">
            <div class="flex h-[47px] shrink-0 items-center gap-2 pt-1.5 pr-4">
                <svg class="size-6" viewBox="0 0 24 24"><path d="M2 2h22v22H2z"/><path d="M1 1h20v20H1z" fill="#fff" stroke="#444"/><path d="M1 7h20v14H1z" fill="#3fc85a"/><path d="M1 11.500h20M1 16.500h20M6.500 7v14M11.500 7v14M16.500 7v14" stroke="#fff"/><path d="M3 4h3M9 4h4M15 4h4" stroke="#e02020" stroke-width="3"/></svg>
                <h2 class="text-[19px] text-[#a8abb2]">Book${b.n} - Sample ${b.n}</h2>
                <div class="ml-auto flex gap-1">
                    <button aria-label="最小化" class="${ctl}"><svg class="size-5" viewBox="0 0 20 20" fill="#fff" stroke="#5d6a80" stroke-width="1.500"><path d="M3 10h14v5H3z"/></svg></button>
                    <button aria-label="还原" class="${ctl}"><svg class="size-5" viewBox="0 0 20 20" fill="#fff" stroke="#5d6a80" stroke-width="1.500"><path d="M2.500 3.500h15v13h-15zM7 8h6v4H7z"/></svg></button>
                    <button aria-label="关闭" class="${ctl}"><svg class="size-5" viewBox="0 0 20 20" fill="#fff" stroke="#5d6a80" stroke-width="1.500"><path d="M3 4h4l3 3 3-3h4l-4 6 4 6h-4l-3-3-3 3H3l4-6z"/></svg></button>
                </div>
            </div>
            <div class="mr-4 flex ${b.h} shrink-0 overflow-hidden bg-[#dededf]">
                <div class="w-[792px] shrink-0">
                <table class="w-[792px] table-fixed border-collapse border-t-2 border-l-2 border-[#333] font-['Liberation_Mono',monospace] text-[15px] leading-5">
                    <colgroup><col class="w-[131px]"/><col class="w-[141px]"/><col class="w-[133px]"/><col class="w-[143px]"/><col class="w-[101px]"/><col class="w-[142px]"/></colgroup>
                    <tr class="h-9"><th class="${side} bg-[#e1e1e4]"></th>${['Tc(X)', 'P(Y)', 'Ta(Y)', 'Err(yEr-)', 'DTc(Y)'].map((c, i) => `<th class="border-r-2 border-b-2 border-black p-0 ${i === 0 && b.bold ? 'bg-[#b9bdcf] text-[17px] font-bold' : 'bg-[#e1e1e4] font-normal'}">${c}</th>`).join('')}</tr>
                    ${info('长名称', names)}${info('单位', units)}${b.comment ? info('注释', ['', '', '', '', '']) : ''}${rows}
                </table>
                </div>
                <div class="ml-auto flex w-[26px] flex-col items-center bg-[#f3f3f5] ${b.n === 3 ? 'justify-end' : ''}">
                    ${b.n === 3 ? '<svg class="h-10 w-[26px]" viewBox="0 0 26 40"><path d="M8 14l5 7 5-7" fill="none" stroke="#444" stroke-width="2.500"/><path d="M0 32h26M0 39h26" stroke="#000" stroke-width="2"/></svg>' : '<svg class="h-[27px] w-[26px]" viewBox="0 0 26 27"><path d="M8 18l5-6 5 6" fill="none" stroke="#555" stroke-width="2.500"/></svg><span class="h-[25px] w-[22px] bg-[#cbcbcd]"></span>'}
                </div>
            </div>
            <div class="mr-4 flex h-[25px] shrink-0 border-t border-black bg-[#c6c6c8]">
                <button aria-label="上一个" class="flex w-[26px] items-center justify-center border-r-2 border-b-2 border-l border-[#777] bg-[#f4f4f6]"><svg class="h-3 w-2" viewBox="0 0 8 12"><path d="M8 0v12L1 6z" fill="#666"/></svg></button>
                <button aria-label="下一个" class="flex w-[26px] items-center justify-center border-r-2 border-b-2 border-[#777] bg-[#f4f4f6]"><svg class="h-3 w-2" viewBox="0 0 8 12"><path d="M0 0v12l7-6z" fill="#666"/></svg></button>
                <div class="relative -mt-px h-[25px] w-[114px] bg-white">
                    <svg class="absolute inset-0 h-[25px] w-[114px]" viewBox="0 0 114 25"><path d="M102 25L113 0h1v25z" fill="#c6c6c8"/><path d="M3 2l9 22M102 25L113 0" stroke="#000" stroke-width="2"/></svg>
                    <b class="relative pl-[17px] font-['Liberation_Mono',monospace] text-[22px] leading-[25px]">Sheet1</b>
                </div>
                ${b.n === 3 ? '<div class="ml-auto flex w-[252px] items-center border-l-2 border-black bg-[#f3f3f5]"><span class="h-full w-1.5 border-r-2 border-black"></span><svg class="mx-2 h-4 w-2.5" viewBox="0 0 10 16"><path d="M8 2L2 8l6 6" fill="none" stroke="#444" stroke-width="2.500"/></svg><span class="h-full w-[157px] bg-[#cbcbcd]"></span><svg class="mx-2 h-4 w-2.5" viewBox="0 0 10 16"><path d="M2 2l6 6-6 6" fill="none" stroke="#444" stroke-width="2.500"/></svg><span class="h-full w-2 border-x-2 border-black"></span></div>' : ''}
            </div>
        </section>`;
    }
    document.getElementById('books').innerHTML = books.map(bookHtml).join('');

    // Data points: [x, y] and error bars [x, y, top, bottom]
    const grown = [[257, 137], [244, 148], [259, 155], [246, 166], [247, 179], [263, 202], [254, 220], [241, 321], [244, 339], [236, 362], [247, 381], [238, 402], [241, 426], [244, 457]];
    const annealed = [[281, 293, 266, 317], [315, 394, 360, 425], [354, 459, 438, 478], [392, 416, 390, 441], [432, 403, 369, 434], [480, 342, 308, 375], [525, 279, 259, 298], [575, 246, 216, 274]];
    const deltas = [[281, 239], [315, 302], [354, 311], [392, 329], [432, 359], [480, 412], [525, 425], [575, 438]];
    document.getElementById('points').innerHTML =
        grown.map(([x, y]) => `<path d="M${x} ${y - 6}l-6 11h12z" fill="#0a800a"/>`).join('') +
        annealed.map(([x, y, a, b]) => `<path d="M${x} ${a}V${b}M${x - 4} ${a}h8M${x - 4} ${b}h8" stroke="#111" stroke-width="1.500"/><path d="M${x - 4} ${y - 4}h9v9h-9z" fill="#e60012"/>`).join('') +
        deltas.map(([x, y]) => `<circle cx="${x}" cy="${y}" r="4.500" fill="#1212f0"/>`).join('');
</script>
</body>
</html>
